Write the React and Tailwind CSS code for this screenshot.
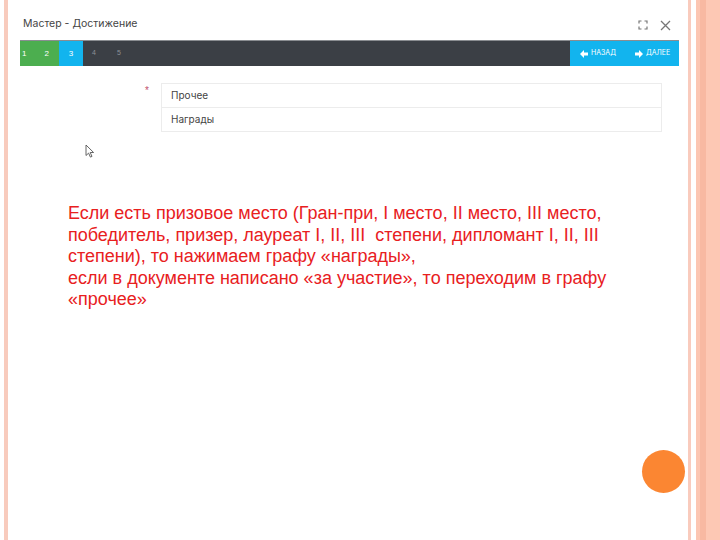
import React from "react"

const Corners = () => (
  <svg width="10" height="10" viewBox="0 0 10 10" fill="none" stroke="#777" strokeWidth="1.2">
    <path d="M1 3.5V1h2.5M6.5 1H9v2.5M9 6.5V9H6.5M3.5 9H1V6.5" />
  </svg>
)

const Close = () => (
  <svg width="11" height="11" viewBox="0 0 11 11" stroke="#777" strokeWidth="1.3">
    <path d="M1 1l9 9M10 1l-9 9" />
  </svg>
)

const Cursor = () => (
  <svg width="10" height="14" viewBox="0 0 10 14" fill="#fff" stroke="#555" strokeWidth="0.9">
    <path d="M1 1v10.5l2.6-2.4 1.8 4 1.6-.7-1.8-3.9H8.6z" />
  </svg>
)

const Arrow = ({ left }) => (
  <svg width="8" height="8" viewBox="0 0 8 8" fill="#fff">
    {left ? <path d="M0 4l4-4v2.5h4v3H4V8z" /> : <path d="M8 4L4 0v2.5H0v3h4V8z" />}
  </svg>
)

export default function App() {
  return (
    <div
      className="w-[720px] h-[540px] bg-white flex overflow-hidden"
      style={{ fontFamily: '"Liberation Sans", Arial, sans-serif' }}
    >
      {/* left edge */}
      <div className="w-[4px] shrink-0" />
      <div className="w-[4px] shrink-0 bg-[#f8cbbd]" />

      {/* main slide */}
      <div className="flex-1 flex flex-col">
        <div className="h-[40px] flex items-center pl-[15px] pr-[7px]">
          <span className="text-[10.5px] text-[#444] mt-[7px]" style={{ fontFamily: "Inter, sans-serif" }}>
            Мастер - Достижение
          </span>
          <div className="ml-auto flex items-center gap-[12px] mt-[10px] mr-[10px]">
            <Corners />
            <Close />
          </div>
        </div>

        <div className="ml-[12px] w-[659px] h-[26px] flex bg-[#3b3f45] border-t border-[#8a8d91] text-white">
          <div className="w-[39px] bg-[#4cae4f] flex items-center text-[8px] pl-[2px] gap-[18px]">
            <span>1</span>
            <span>2</span>
          </div>
          <div className="w-[24px] bg-[#12b4ee] flex items-center justify-center text-[8px]">3</div>
          <div className="flex items-center text-[7px] text-[#8c9096] pl-[9px] gap-[21px]">
            <span>4</span>
            <span>5</span>
          </div>
          <div className="ml-auto w-[109px] bg-[#12b4ee] flex items-center text-[7px] pl-[10px]" style={{ fontFamily: "Inter, sans-serif" }}>
            <span className="flex items-center gap-[3px]"><Arrow left />НАЗАД</span>
            <span className="flex items-center gap-[3px] ml-[19px]"><Arrow />ДАЛЕЕ</span>
          </div>
        </div>

        <div className="flex mt-[17px]">
          <span className="w-[153px] text-right pr-[12px] text-[#c0506b] text-[10px] leading-none pt-[3px]">*</span>
          <div className="w-[501px] border border-[#ececec] text-[10px] text-[#444]" style={{ fontFamily: "Inter, sans-serif" }}>
            <div className="h-[24px] flex items-center pl-[9px] border-b border-[#ececec]">Прочее</div>
            <div className="h-[23px] flex items-center pl-[9px]">Награды</div>
          </div>
        </div>

        <div className="ml-[77px] mt-[12px]">
          <Cursor />
        </div>

        <div className="ml-[60px] mt-[45px] text-[18px] leading-[21.5px] text-[#e8201e]">
          Если есть призовое место (Гран-при, I место, II место, III место,
          <br />
          победитель, призер, лауреат I, II, III&nbsp; степени, дипломант I, II, III
          <br />
          степени), то нажимаем графу «награды»,
          <br />
          если в документе написано «за участие», то переходим в графу
          <br />
          «прочее»
        </div>

        <div className="flex-1" />
        <div className="flex justify-end pr-[3px] mb-[47px]">
          <div className="w-[43px] h-[43px] rounded-full bg-[#fb8632]" />
        </div>
      </div>

      {/* right edge stripes */}
      <div className="w-[3px] shrink-0 bg-[#f9cbbd]" />
      <div className="w-[5px] shrink-0 bg-white" />
      <div className="w-[4px] shrink-0 bg-[#fcc6b2]" />
      <div className="w-[6px] shrink-0 bg-[#f8b9a2]" />
      <div className="w-[14px] shrink-0 bg-[#fdc8b4]" />
    </div>
  )
}
